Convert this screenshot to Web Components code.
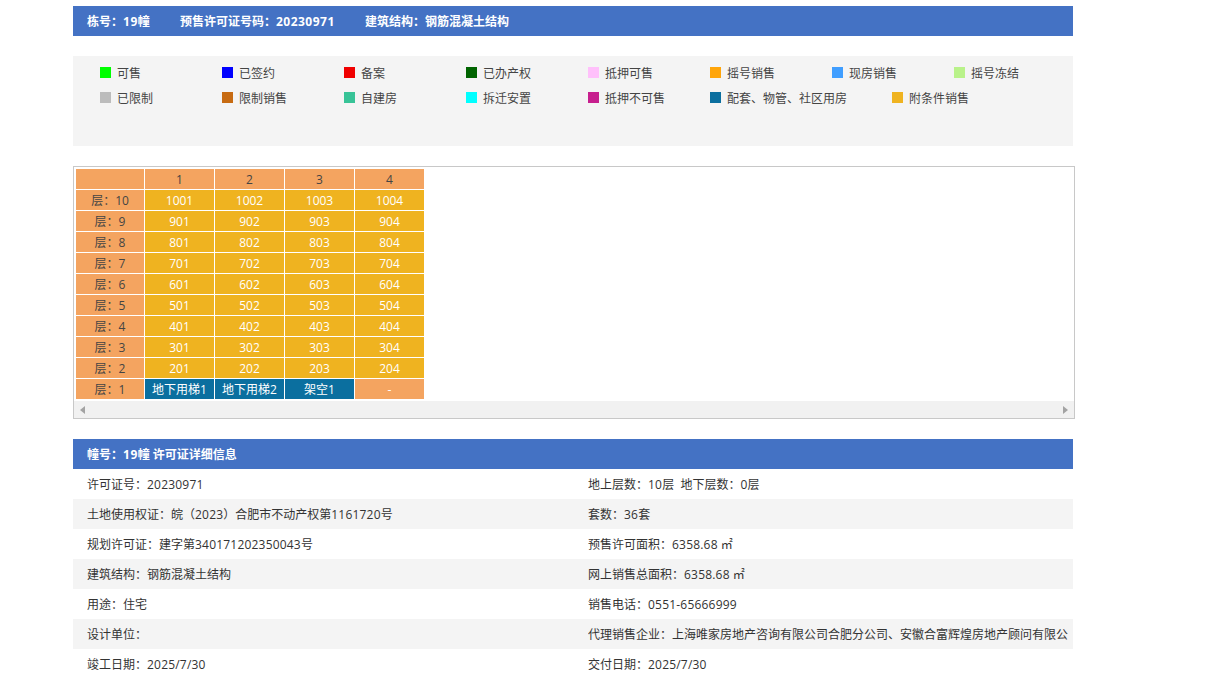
<!DOCTYPE html>
<html lang="zh-CN">
<head>
<meta charset="utf-8">
<title>楼栋信息</title>
<style>
    html, body { margin: 0; padding: 0; background: #fff; }
    body { font: 12px "Open Sans", "Noto Sans CJK SC", sans-serif; color: #333; }
    b { font-weight: inherit; letter-spacing: .2px; }
    title-bar b { letter-spacing: .5px; }
</style>
</head>
<body>
<building-page>
    <title-bar style="margin-bottom:20px">
        <span>栋号&#xFF1A;<b>19</b>幢</span>
        <span>预售许可证号码&#xFF1A;<b>20230971</b></span>
        <span>建筑结构&#xFF1A;钢筋混凝土结构</span>
    </title-bar>

    <legend-panel>
        <legend-row>
            <legend-item color="#00ff00">可售</legend-item>
            <legend-item color="#0000ff">已签约</legend-item>
            <legend-item color="#f00000">备案</legend-item>
            <legend-item color="#006400">已办产权</legend-item>
            <legend-item color="#ffc0fb">抵押可售</legend-item>
            <legend-item color="#ffa50a">摇号销售</legend-item>
            <legend-item color="#409eff">现房销售</legend-item>
            <legend-item color="#b9f28a">摇号冻结</legend-item>
        </legend-row>
        <legend-row>
            <legend-item color="#bcbcbc">已限制</legend-item>
            <legend-item color="#c76b12">限制销售</legend-item>
            <legend-item color="#38c397">自建房</legend-item>
            <legend-item color="#00ffff">拆迁安置</legend-item>
            <legend-item color="#c71f8e">抵押不可售</legend-item>
            <legend-item color="#0b6f9f" wide>配套、物管、社区用房</legend-item>
            <legend-item color="#efb320">附条件销售</legend-item>
        </legend-row>
    </legend-panel>

    <floor-table></floor-table>

    <title-bar>
        <span>幢号&#xFF1A;<b>19</b>幢 许可证详细信息</span>
    </title-bar>

    <detail-row>
        <span slot="left">许可证号&#xFF1A;<b>20230971</b></span>
        <span slot="right">地上层数&#xFF1A;<b>10</b>层&nbsp;&nbsp;地下层数&#xFF1A;<b>0</b>层</span>
    </detail-row>
    <detail-row shaded>
        <span slot="left">土地使用权证&#xFF1A;皖&#xFF08;<b>2023</b>&#xFF09;合肥市不动产权第<b>1161720</b>号</span>
        <span slot="right">套数&#xFF1A;<b>36</b>套</span>
    </detail-row>
    <detail-row>
        <span slot="left">规划许可证&#xFF1A;建字第<b>340171202350043</b>号</span>
        <span slot="right">预售许可面积&#xFF1A;<b>6358.68</b> ㎡</span>
    </detail-row>
    <detail-row shaded>
        <span slot="left">建筑结构&#xFF1A;钢筋混凝土结构</span>
        <span slot="right">网上销售总面积&#xFF1A;<b>6358.68</b> ㎡</span>
    </detail-row>
    <detail-row>
        <span slot="left">用途&#xFF1A;住宅</span>
        <span slot="right">销售电话&#xFF1A;<b>0551-65666999</b></span>
    </detail-row>
    <detail-row shaded>
        <span slot="left">设计单位&#xFF1A;</span>
        <span slot="right">代理销售企业&#xFF1A;上海唯家房地产咨询有限公司合肥分公司、安徽合富辉煌房地产顾问有限公</span>
    </detail-row>
    <detail-row>
        <span slot="left">竣工日期&#xFF1A;<b>2025/7/30</b></span>
        <span slot="right">交付日期&#xFF1A;<b>2025/7/30</b></span>
    </detail-row>
</building-page>

<script>
class BuildingPage extends HTMLElement {
    constructor() {
        super();
        this.attachShadow({ mode: 'open' });
    }

    connectedCallback() {
        this.shadowRoot.innerHTML = `
            <style>
                :host{
                    display: block;
                    width: 1000px;
                    margin-left: 73px;
                    padding-top: 6px;
                }
            </style>
            <slot></slot>
        `;
    }
}

class TitleBar extends HTMLElement {
    constructor() {
        super();
        this.attachShadow({ mode: 'open' });
    }

    connectedCallback() {
        this.shadowRoot.innerHTML = `
            <style>
                :host{
                    display: block;
                    background: #4472c4;
                    color: #fff;
                    font-weight: bold;
                    height: 30px;
                    line-height: 32px;
                    padding-left: 14px;
                }
                ::slotted(span){
                    margin-right: 27px;
                }
            </style>
            <slot></slot>
        `;
    }
}

class LegendPanel extends HTMLElement {
    constructor() {
        super();
        this.attachShadow({ mode: 'open' });
    }

    connectedCallback() {
        this.shadowRoot.innerHTML = `
            <style>
                :host{
                    display: block;
                    box-sizing: border-box;
                    height: 90px;
                    margin-bottom: 20px;
                    padding: 5px 0 0 27px;
                    background: #f4f4f4;
                }
            </style>
            <slot></slot>
        `;
    }
}

class LegendRow extends HTMLElement {
    constructor() {
        super();
        this.attachShadow({ mode: 'open' });
    }

    connectedCallback() {
        this.shadowRoot.innerHTML = `
            <style>
                :host{
                    display: flex;
                    height: 25px;
                }
            </style>
            <slot></slot>
        `;
    }
}

class LegendItem extends HTMLElement {
    constructor() {
        super();
        this.attachShadow({ mode: 'open' });
    }

    connectedCallback() {
        const color = this.getAttribute('color');

        this.shadowRoot.innerHTML = `
            <style>
                :host{
                    display: flex;
                    flex: none;
                    align-items: center;
                    width: 122px;
                    height: 25px;
                    color: #444;
                }
                :host([wide]){
                    width: 182px;
                }
                i{
                    width: 11px;
                    height: 11px;
                    margin-right: 6px;
                    margin-top: -2px;
                    background: ${color};
                }
                span{
                    margin-top: -2px;
                }
            </style>
            <i></i><span><slot></slot></span>
        `;
    }
}

class FloorTable extends HTMLElement {
    constructor() {
        super();
        this.attachShadow({ mode: 'open' });
    }

    connectedCallback() {
        let rows = "<tr><th></th><th>1</th><th>2</th><th>3</th><th>4</th></tr>";
        for(let floor = 10; floor >= 2; floor--){
            rows += "<tr><th>层\uFF1A"+floor+"</th>";
            for(let room = 1; room <= 4; room++){
                rows += "<td>"+floor+"0"+room+"</td>";
            }
            rows += "</tr>";
        }
        rows += "<tr><th>层\uFF1A1</th><td class='tech'>地下用梯1</td><td class='tech'>地下用梯2</td><td class='tech'>架空1</td><td class='none'>-</td></tr>";

        this.shadowRoot.innerHTML = `
            <style>
                :host{
                    box-sizing: border-box;
                    width: 1002px;
                    height: 253px;
                    margin-bottom: 20px;
                    border: 1px solid #c8c8c8;
                    display: flex;
                    flex-direction: column;
                }
                .view{
                    flex: 1;
                    padding: 1px 0 0 1px;
                }
                table{
                    border-collapse: separate;
                    border-spacing: 1px;
                    table-layout: fixed;
                    width: 350px;
                }
                th, td{
                    width: 69px;
                    height: 18px;
                    padding: 2px 0 0;
                    text-align: center;
                    font-weight: normal;
                    line-height: 18px;
                    background: #f4a460;
                    color: #444;
                    white-space: nowrap;
                }
                th:first-child{
                    width: 68px;
                }
                td{
                    background: #efb320;
                    color: #fff;
                }
                td.tech{
                    background: #0b6f9f;
                }
                td.none{
                    background: #f4a460;
                }
                .bar{
                    display: flex;
                    justify-content: space-between;
                    align-items: center;
                    height: 17px;
                    padding: 0 6px;
                    background: #f1f1f1;
                }
                .left, .right{
                    width: 0;
                    height: 0;
                    border-top: 4px solid transparent;
                    border-bottom: 4px solid transparent;
                }
                .left{ border-right: 5px solid #a3a3a3; }
                .right{ border-left: 5px solid #a3a3a3; }
            </style>
            <div class="view"><table>${rows}</table></div>
            <div class="bar"><span class="left"></span><span class="right"></span></div>
        `;
    }
}

class DetailRow extends HTMLElement {
    constructor() {
        super();
        this.attachShadow({ mode: 'open' });
    }

    connectedCallback() {
        this.shadowRoot.innerHTML = `
            <style>
                :host{
                    display: grid;
                    grid-template-columns: 501px 480px;
                    height: 30px;
                    line-height: 32px;
                    padding-left: 14px;
                    color: #333;
                    white-space: nowrap;
                }
                :host([shaded]){
                    background: #f4f4f4;
                }
                div{
                    overflow: hidden;
                }
            </style>
            <div><slot name="left"></slot></div>
            <div><slot name="right"></slot></div>
        `;
    }
}

// Registrar los custom elements
customElements.define('building-page', BuildingPage);
customElements.define('title-bar', TitleBar);
customElements.define('legend-panel', LegendPanel);
customElements.define('legend-row', LegendRow);
customElements.define('legend-item', LegendItem);
customElements.define('floor-table', FloorTable);
customElements.define('detail-row', DetailRow);
</script>
</body>
</html>
